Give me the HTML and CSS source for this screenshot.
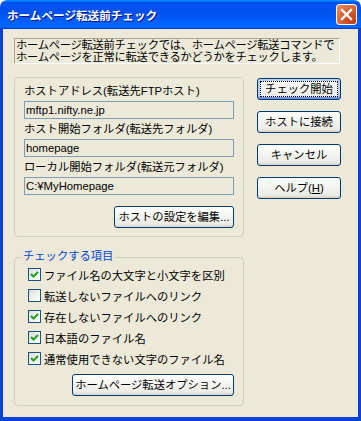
FILE: index.html
```html
<!DOCTYPE html>
<html lang="ja">
<head>
  <meta charset="UTF-8">
  <link rel="stylesheet" href="styles.css">
</head>
<body>
  <div class="window">
    <div class="titlebar">
      <span class="title">ホームページ転送前チェック</span>
      <button class="close-button" type="button">
        <svg width="13" height="13" viewBox="0 0 13 13">
          <path d="M2 2 L11 11 M11 2 L2 11" stroke="#fff" stroke-width="2.4" stroke-linecap="square" />
        </svg>
      </button>
    </div>
    <div class="client">
      <p class="intro">ホームページ転送前チェックでは、ホームページ転送コマンドで<br>ホームページを正常に転送できるかどうかをチェックします。</p>
      <div class="main">
        <div class="left-column">
          <!-- ホスト情報 -->
          <div class="group host-group">
            <label class="field-label" for="host">ホストアドレス(転送先FTPホスト)</label>
            <input class="field" id="host" value="mftp1.nifty.ne.jp" readonly>
            <label class="field-label" for="remote">ホスト開始フォルダ(転送先フォルダ)</label>
            <input class="field" id="remote" value="homepage" readonly>
            <label class="field-label" for="local">ローカル開始フォルダ(転送元フォルダ)</label>
            <input class="field" id="local" value="C:¥MyHomepage" readonly>
            <div class="group-actions">
              <button class="btn btn-edit" type="button">ホストの設定を編集...</button>
            </div>
          </div>
          <!-- チェック項目 -->
          <fieldset class="group check-group">
            <legend>チェックする項目</legend>
            <label class="check"><span class="box checked"></span>ファイル名の大文字と小文字を区別</label>
            <label class="check"><span class="box"></span>転送しないファイルへのリンク</label>
            <label class="check"><span class="box checked"></span>存在しないファイルへのリンク</label>
            <label class="check"><span class="box checked"></span>日本語のファイル名</label>
            <label class="check"><span class="box checked"></span>通常使用できない文字のファイル名</label>
            <div class="group-actions options-row">
              <button class="btn btn-options" type="button">ホームページ転送オプション...</button>
            </div>
          </fieldset>
        </div>
        <div class="button-column">
          <button class="btn btn-default" type="button">チェック開始</button>
          <button class="btn" type="button">ホストに接続</button>
          <button class="btn" type="button">キャンセル</button>
          <button class="btn" type="button">ヘルプ(<u>H</u>)</button>
        </div>
      </div>
    </div>
  </div>
</body>
</html>
```

FILE: styles.css
```css
body, html {
  margin: 0;
  padding: 0;
  background: #fff;
}

.window {
  width: 361px;
  height: 421px;
  display: flex;
  flex-direction: column;
  border-radius: 7px 7px 0 0;
  overflow: hidden;
  font-family: "Liberation Sans", "Noto Sans CJK JP", sans-serif;
  font-size: 11.3px;
  color: #000;
}

/* barre de titre */
.titlebar {
  height: 29px;
  flex: none;
  display: flex;
  align-items: center;
  justify-content: space-between;
  padding: 0 4px 0 7px;
  box-sizing: border-box;
  background: linear-gradient(180deg, #0997ff, #0053ee 8%, #0050ee 40%, #0066ff 88%, #0066ff 93%, #005bff 95%, #003dd7 96%, #003dd7);
}

.title {
  color: #fff;
  font-weight: bold;
  font-size: 11.6px;
  text-shadow: 1px 1px #0f1089;
}

.close-button {
  width: 21px;
  height: 21px;
  padding: 0;
  border: 1px solid #fff;
  border-radius: 3px;
  background: radial-gradient(circle at 85% 85%, #c23c15 0%, #d55a2c 45%, #e7875f 90%);
  display: flex;
  align-items: center;
  justify-content: center;
}

.client {
  flex: 1;
  background: #ece9d8;
  border: 3px solid #0842d6;
  border-top: 0;
  border-bottom-width: 4px;
  padding: 9px 0 0 11px;
}

.intro {
  margin: 0;
  width: 326px;
  height: 26px;
  box-sizing: border-box;
  padding: 0 0 0 1px;
  border: 1px solid;
  border-color: #a8a595 #fff #fff #a8a595;
  line-height: 12px;
  letter-spacing: -0.28px;
  white-space: nowrap;
}

.main {
  display: flex;
  gap: 13px;
  margin-top: 13px;
}

.left-column {
  width: 230px;
}

.group {
  border: 1px solid #d0d0bf;
  border-radius: 4px;
  box-sizing: border-box;
  width: 230px;
}

.host-group {
  padding: 6px 9px 8px 9px;
}

.field-label {
  display: block;
  line-height: 14px;
  margin-top: 3px;
  margin-bottom: 3px;
}

.field-label:first-child {
  margin-top: 0;
}

.field {
  display: block;
  width: 210px;
  height: 18px;
  box-sizing: border-box;
  margin: 0;
  padding: 0 0 0 1px;
  border: 1px solid #7f9db9;
  background: #ece9d8;
  font: inherit;
  outline: none;
}

.group-actions {
  display: flex;
  justify-content: flex-end;
  margin-top: 11px;
}

.check-group {
  margin: 13px 0 0 0;
  padding: 0 9px 9px 13px;
  min-inline-size: 0;
}

.check-group legend {
  color: #0046d5;
  line-height: 12px;
  padding: 0 2px 2px 2px;
  margin-left: -7px;
}

.check {
  display: flex;
  align-items: center;
  gap: 3px;
  height: 21px;
}

.box {
  width: 13px;
  height: 13px;
  box-sizing: border-box;
  border: 1px solid #1c5180;
  background: linear-gradient(135deg, #dcdcd7 0%, #f7f7f4 70%, #fff 100%);
  flex: none;
}

.box.checked {
  background-image: url("data:image/svg+xml;utf8,<svg xmlns='http://www.w3.org/2000/svg' width='11' height='11'><path d='M2 5 L4.5 7.5 L9 3' fill='none' stroke='%2321a121' stroke-width='2'/></svg>"), linear-gradient(135deg, #dcdcd7 0%, #f7f7f4 70%, #fff 100%);
}

.options-row {
  margin-top: 5px;
}

/* boutons */
.button-column {
  display: flex;
  flex-direction: column;
  gap: 11px;
  margin-top: 1px;
}

.btn {
  height: 22px;
  box-sizing: border-box;
  padding: 0;
  border: 1px solid #003c74;
  border-radius: 3px;
  background: linear-gradient(180deg, #fff 0%, #f4f4f0 45%, #ecebe6 85%, #d6d0c5 100%);
  font: inherit;
  color: #000;
  line-height: 18px;
  white-space: nowrap;
}

.button-column .btn {
  width: 84px;
}

.btn-default {
  box-shadow: inset 0 -2px 0 #6f8fe8, inset 0 0 0 2px #b8d0f7;
  outline: 1px dotted #000;
  outline-offset: -4px;
}

.btn-edit {
  width: 120px;
}

.btn-options {
  width: 162px;
}
```
